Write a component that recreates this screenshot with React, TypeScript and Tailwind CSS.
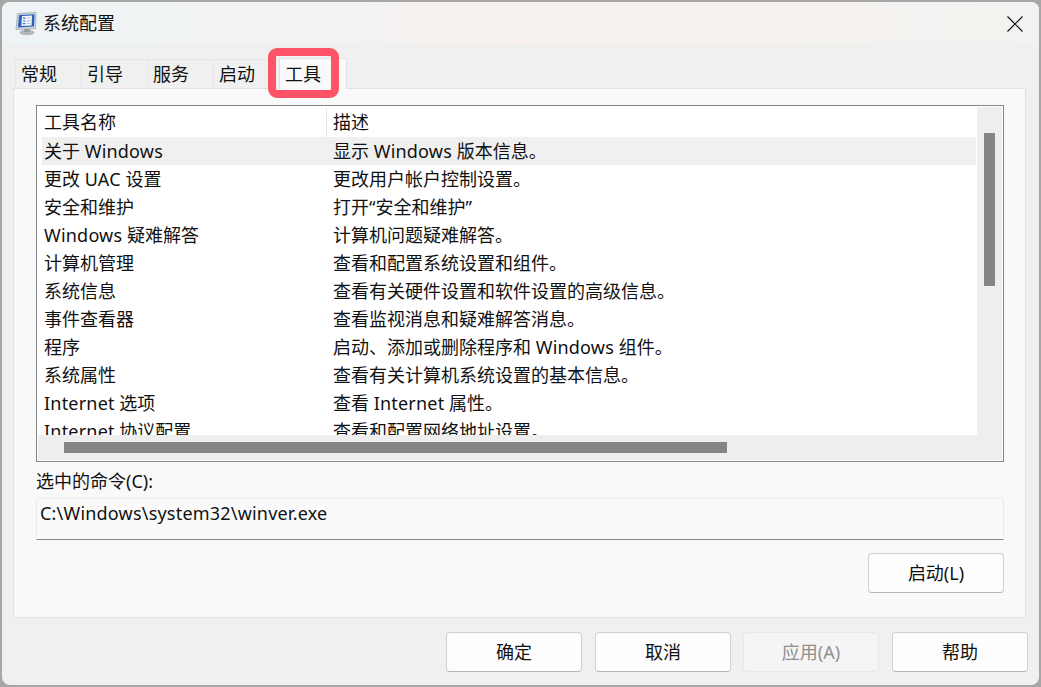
const tabs = ['常规', '引导', '服务', '启动'];

const rows = [
  ['关于 Windows', '显示 Windows 版本信息。'],
  ['更改 UAC 设置', '更改用户帐户控制设置。'],
  ['安全和维护', '打开“安全和维护”'],
  ['Windows 疑难解答', '计算机问题疑难解答。'],
  ['计算机管理', '查看和配置系统设置和组件。'],
  ['系统信息', '查看有关硬件设置和软件设置的高级信息。'],
  ['事件查看器', '查看监视消息和疑难解答消息。'],
  ['程序', '启动、添加或删除程序和 Windows 组件。'],
  ['系统属性', '查看有关计算机系统设置的基本信息。'],
  ['Internet 选项', '查看 Internet 属性。'],
  ['Internet 协议配置', '查看和配置网络地址设置。'],
];

// latin runs are a touch wider than Noto in the original UI font
function Label({ text }: { text: string }) {
  return (
    <>
      {text.split(/([A-Za-z0-9:\\.]+)/).map((part, i) =>
        i % 2 === 1 ? (
          <span key={i} className="tracking-[0.2px]">
            {part}
          </span>
        ) : (
          part
        ),
      )}
    </>
  );
}

function DialogButton({ label, disabled, className = '' }: { label: string; disabled?: boolean; className?: string }) {
  return (
    <button
      className={`w-[136px] h-10 rounded-[4px] border text-[18px] ${
        disabled
          ? 'bg-[#f5f5f5] border-[#e8e8e8] text-[#8f8f8f]'
          : 'bg-[#fdfdfd] border-[#d0d0d0] border-b-[#b4b4b4] text-[#111]'
      } ${className}`}
    >
      {label}
    </button>
  );
}

function AppIcon() {
  return (
    <svg width="22" height="24" viewBox="0 0 22 24" className="shrink-0">
      <ellipse cx="12" cy="20.5" rx="7.5" ry="2.8" fill="#b4b8bc" />
      <rect x="9" y="16" width="6" height="4" fill="#9aa0a6" />
      <path d="M2.5 1.5 L21 0.5 L20.5 16.5 L1 17.5 Z" fill="#d5dade" stroke="#8b929a" strokeWidth="0.6" />
      <path d="M4 3 L19.5 2.2 L19 14.5 L3 15.4 Z" fill="#2b5fc0" />
      <path d="M7 4 L17 3.4 L16.6 13.4 L6.4 14 Z" fill="#f2f6fb" />
      <path d="M8 6.2 H10.5 M8 9 H10.5 M7.8 11.6 H10.3" stroke="#2f74d6" strokeWidth="1.2" />
      <path d="M12 6 H15.5 M12 8.8 H15.5 M11.8 11.4 H15.2" stroke="#9fb2c8" strokeWidth="0.8" />
    </svg>
  );
}

export default function App() {
  return (
    <div className="w-[1041px] h-[687px] bg-[#a6a6a6] p-[2px] overflow-hidden font-['Noto_Sans','Noto_Sans_CJK_SC',sans-serif] text-[18px] text-[#111]">
      <div className="relative h-full rounded-[8px] bg-[#f0f0f0] flex flex-col overflow-hidden">
        {/* Title bar */}
        <div className="h-[43px] shrink-0 flex items-center pl-[13px] pr-[16px] bg-gradient-to-r from-[#eef4f6] via-[#f6f1ee] to-[#f3f2f0]">
          <AppIcon />
          <span className="ml-[6px] text-[18px]">系统配置</span>
          <svg width="16" height="16" viewBox="0 0 16 16" className="ml-auto" fill="none" stroke="#111" strokeWidth="1.2">
            <path d="M0.5 0.5 L15.5 15.5 M15.5 0.5 L0.5 15.5" />
          </svg>
        </div>

        {/* Tabs */}
        <div className="h-[43px] shrink-0 flex items-end pl-[13px]">
          {tabs.map((tab) => (
            <div
              key={tab}
              className="w-[67px] h-[29px] flex items-center pl-[5px] border border-b-0 border-[#e6e6e6] bg-[#f0f0f0] -mr-px"
            >
              {tab}
            </div>
          ))}
          <div className="relative z-10 w-[68px] h-[31px] -mb-px flex items-center pl-[5px] border border-b-0 border-[#e2e2e2] bg-[#f9f9f9]">
            工具
          </div>
        </div>

        {/* Tab panel */}
        <div className="ml-[11px] mr-[13px] h-[530px] shrink-0 border border-[#e2e2e2] bg-[#f9f9f9] pt-4 pl-[22px] pr-[21px] flex flex-col">
          <div className="h-[357px] shrink-0 border border-[#85858a] bg-white p-px flex flex-col">
            <div className="flex-1 min-h-0 flex">
              <div className="flex-1 min-w-0 overflow-hidden">
                <div className="h-[30px] flex items-center pt-px">
                  <div className="w-[289px] h-full flex items-center pl-[6px] border-r border-[#e4e4e4]">工具名称</div>
                  <div className="pl-[6px]">描述</div>
                </div>
                {rows.map(([name, desc], i) => (
                  <div
                    key={name}
                    className={`ml-1 h-[28px] flex items-center whitespace-nowrap ${i === 0 ? 'bg-[#f0f0f0]' : ''}`}
                  >
                    <div className="w-[291px] pl-[2px]">
                      <Label text={name} />
                    </div>
                    <div>
                      <Label text={desc} />
                    </div>
                  </div>
                ))}
              </div>
              <div className="w-[25px] ml-px shrink-0 bg-[#eeeeee] px-[7px] pt-[26px]">
                <div className="h-[153px] bg-[#858585]" />
              </div>
            </div>
            <div className="h-[25px] shrink-0 bg-[#eeeeee] pl-[26px] pt-[7px]">
              <div className="w-[663px] h-[11px] bg-[#858585]" />
            </div>
          </div>

          <label className="mt-[7px] h-[24px] leading-[24px]">选中的命令(C):</label>
          <div className="mt-[5px] h-[42px] shrink-0 rounded-t-[3px] border border-[#ececec] border-b-[#858585] bg-[#fafafa] pl-[3px] pb-[11px] flex items-center">
            <Label text="C:\Windows\system32\winver.exe" />
          </div>
          <div className="mt-[13px] flex justify-end">
            <DialogButton label="启动(L)" />
          </div>
        </div>

        {/* Footer buttons */}
        <div className="mt-[14px] flex justify-end gap-[13px] pr-[11px]">
          <DialogButton label="确定" />
          <DialogButton label="取消" />
          <DialogButton label="应用(A)" disabled className="-ml-px" />
          <DialogButton label="帮助" />
        </div>

        {/* Red annotation around the active tab */}
        <div className="absolute left-[266px] top-[46px] w-[71px] h-[50px] rounded-[9px] border-[8px] border-[#ff5468] z-20" />
      </div>
    </div>
  );
}
